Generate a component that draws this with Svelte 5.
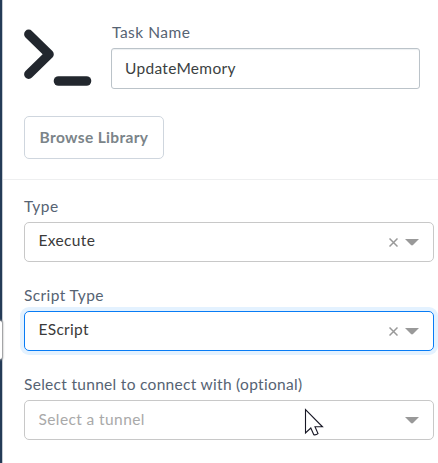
<script>
  const fields = [
    { label: 'Type', labelGap: 0.5, value: 'Execute', gap: 0.35, clear: true },
    { label: 'Script Type', labelGap: 0.4, value: 'EScript', gap: 0.3, clear: true, focused: true },
    { label: 'Select tunnel to connect with (optional)', labelGap: 0.3, value: 'Select a tunnel', gap: 0.4, placeholder: true }
  ];
</script>

<div class="page">
  <div class="rail"><span class="handle"></span></div>
  <main>
    <header>
      <div class="task">
        <svg class="terminal" width="68" height="58" viewBox="0 0 68 58" fill="none" stroke="#22272e" stroke-linecap="round" stroke-linejoin="round">
          <path d="M4.7 5.2 L25.2 25.2 L4.7 45.3" stroke-width="9.2" />
          <path d="M34.5 52 H62.5" stroke-width="9.6" />
        </svg>
        <div class="name">
          <div class="label task-label">Task Name</div>
          <div class="input">UpdateMemory</div>
        </div>
      </div>
      <button>Browse Library</button>
    </header>
    <section>
      {#each fields as f}
        <div class="field">
          <div class="label" style="letter-spacing: {f.labelGap}px">{f.label}</div>
          <div class="select" class:focused={f.focused} class:placeholder={f.placeholder}>
            <span class="value" style="letter-spacing: {f.gap}px">{f.value}</span>
            {#if f.clear}
              <svg class="clear" width="9" height="9" viewBox="0 0 9 9"><path d="M0.5 0.5 L8.5 8.5 M8.5 0.5 L0.5 8.5" stroke="#999" stroke-width="1.5" /></svg>
            {/if}
            <svg width="14" height="7" viewBox="0 0 14 7"><path d="M0 0 H14 L8 6 Q7 6.8 6 6 Z" fill="#999" /></svg>
          </div>
        </div>
      {/each}
    </section>
  </main>
  <svg class="cursor" width="20" height="29" viewBox="0 0 20 29"><path d="M1.5 1.5 V25 L6.8 20 L9.8 26.7 Q12 27.3 14 25.6 L11 18.8 H18.5 Z" fill="#fff" stroke="#171725" stroke-width="1.1" /></svg>
</div>

<style>
  .page {
    box-sizing: border-box;
    position: relative;
    display: flex;
    width: 438px;
    height: 463px;
    overflow: hidden;
    background: #fff;
    color: #3b3f42;
    font: 15.5px/20px Lato, 'Open Sans', sans-serif;
  }
  .rail {
    position: relative;
    box-sizing: border-box;
    width: 3px;
    flex: none;
    background: #243b57;
    border-right: 1px solid #c5cbd2;
  }
  .handle {
    position: absolute;
    left: -4px;
    top: 321px;
    width: 6px;
    height: 38px;
    border-radius: 0 2px 2px 0;
    background: #fff;
    box-shadow: 0 0 2px 1px #999;
  }
  main { flex: 1; min-width: 0; }
  header {
    box-sizing: border-box;
    height: 180px;
    padding: 22px 18px 0 21px;
    border-bottom: 1px solid #eeeff0;
  }
  .task { display: flex; height: 94px; }
  .terminal { margin-top: 7px; flex: none; }
  .name { width: 309px; margin-left: 19px; }
  .label { color: #566373; white-space: nowrap; }
  .task-label { padding-left: 1px; letter-spacing: 0.5px; }
  .input {
    box-sizing: border-box;
    height: 41px;
    margin-top: 6px;
    padding: 9px 13px;
    border: 1px solid #bbc3c9;
    border-radius: 3px;
    box-shadow: inset 0 1px 1px #edf0f2;
    letter-spacing: 0.3px;
  }
  button {
    display: block;
    box-sizing: border-box;
    width: 140px;
    height: 43px;
    padding: 0 0 2px;
    border: 1px solid #cfd6de;
    border-radius: 5px;
    background: #fff;
    color: #7b8489;
    font: 700 15.5px/20px Lato, sans-serif;
    letter-spacing: 0.35px;
  }
  section { padding: 16px 4px 0 21px; }
  .field { height: 89px; }
  .select {
    display: flex;
    align-items: center;
    box-sizing: border-box;
    height: 40px;
    margin-top: 6px;
    padding: 0 14px 0 13.5px;
    border: 1px solid #c8c8c8;
    border-radius: 5px;
  }
  .focused {
    border-color: #087cf5;
    box-shadow: 0 0 0 4px #e4f2ff;
  }
  .value { flex: 1; margin-top: -4px; color: #3a3a3a; }
  .placeholder .value { margin-top: -2px; color: #a9a9a9; }
  .clear { margin-right: 7px; }
  .cursor { position: absolute; left: 304px; top: 408px; }
</style>
